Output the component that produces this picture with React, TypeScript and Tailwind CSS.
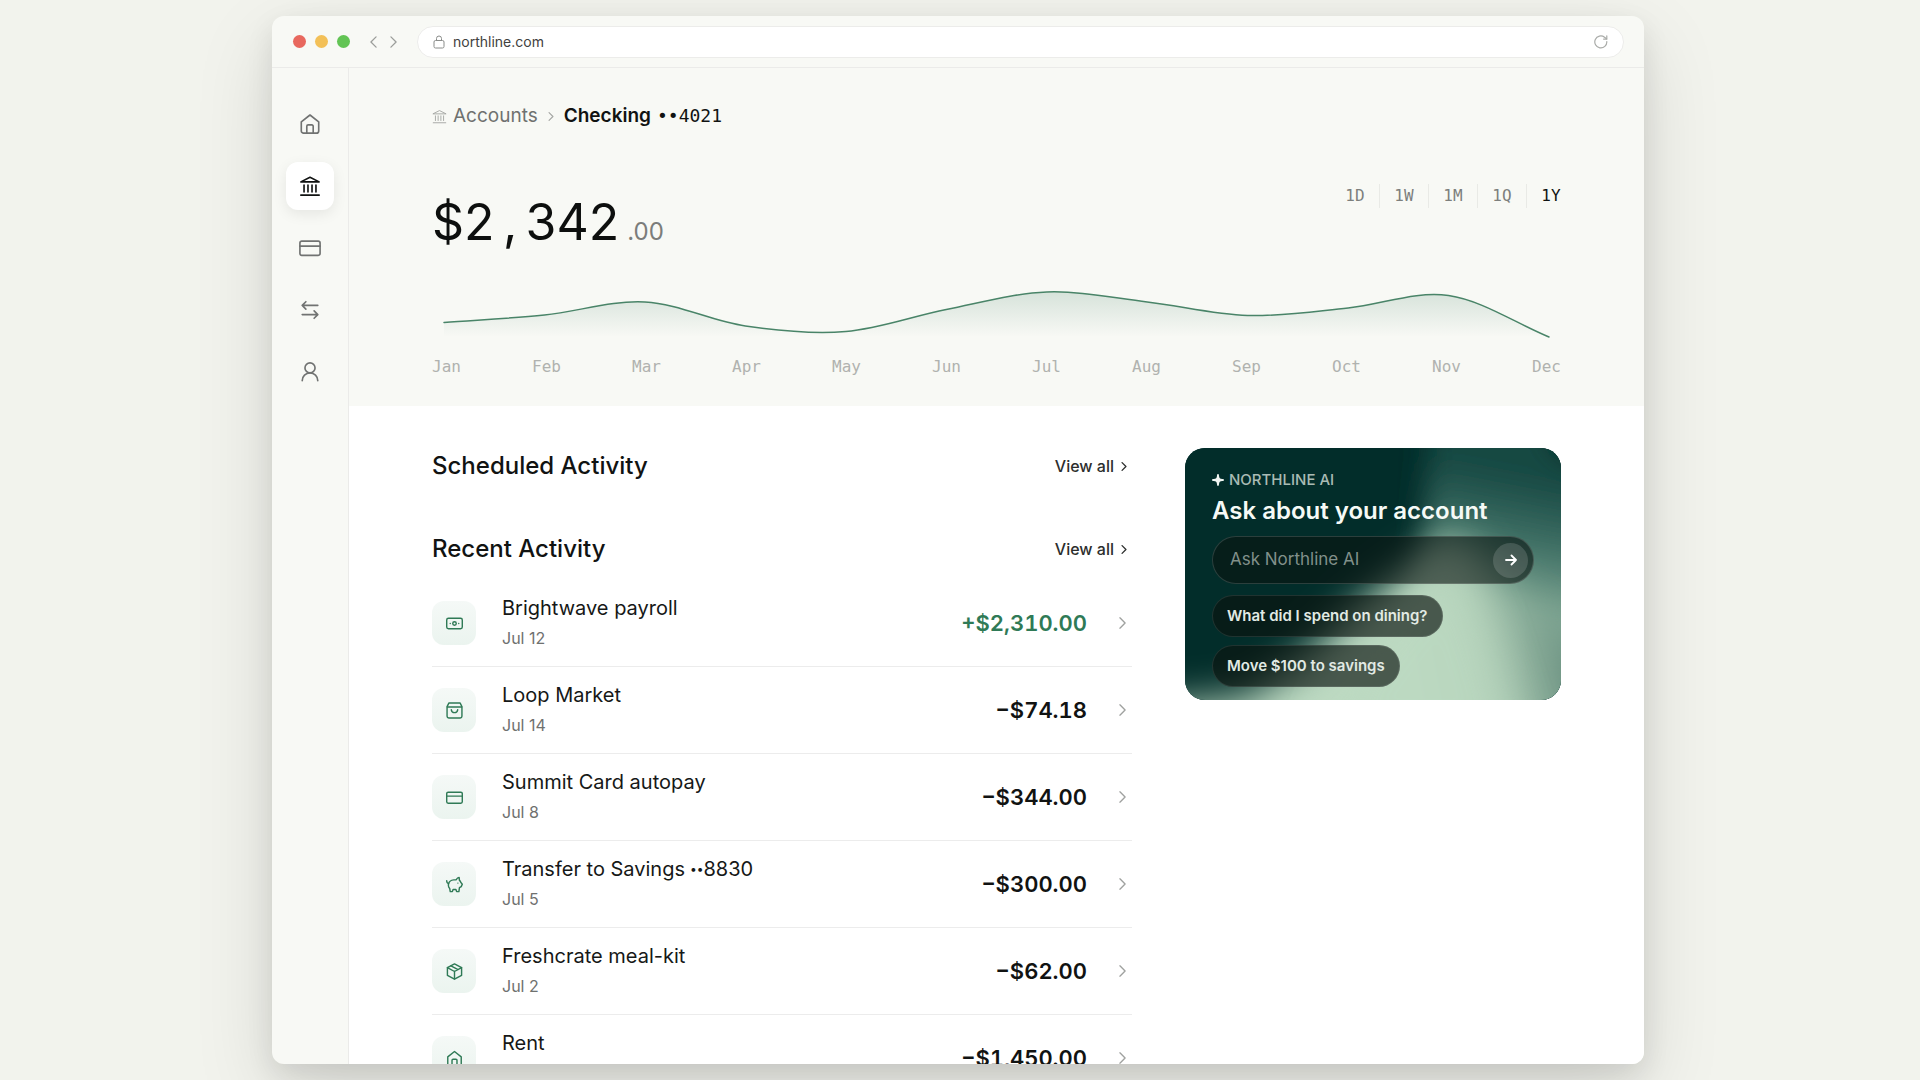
import { useState } from "react";
import type { ReactNode } from "react";

type IconName =
  | "home"
  | "bank"
  | "card"
  | "transfer"
  | "user"
  | "cash"
  | "bag"
  | "piggy"
  | "box";

// Line icons on a 24x24 grid
const ICON_PATHS: Record<IconName, ReactNode> = {
  home: (
    <>
      <path d="M2.500 9.700 12 2.200l9.500 7.500V19.500a2.500 2.500 0 0 1-2.500 2.500H5a2.500 2.500 0 0 1-2.500-2.500z" />
      <path d="M8.500 22v-7.500a1.500 1.500 0 0 1 1.500-1.500h4a1.500 1.500 0 0 1 1.500 1.500V22" />
    </>
  ),
  bank: (
    <>
      <path d="M2 7.500 12 2.500l10 5z" />
      <path d="M2 22h20M5.500 11v7.500M9.800 11v7.500M14.200 11v7.500M18.500 11v7.500" />
    </>
  ),
  card: (
    <>
      <rect x="1" y="4.500" width="22" height="15.500" rx="2" />
      <path d="M1 10h22" />
    </>
  ),
  transfer: (
    <>
      <path d="M20.500 7h-17M7.500 3l-4 4 4 4" />
      <path d="M3.500 17h17M16.500 13l4 4-4 4" />
    </>
  ),
  user: (
    <>
      <circle cx="12" cy="7.500" r="5.500" />
      <path d="M3.500 21.500c0-4.700 3.800-8.500 8.500-8.500s8.500 3.800 8.500 8.500" />
    </>
  ),
  cash: (
    <>
      <rect x="1" y="4.500" width="22" height="15" rx="2.500" />
      <circle cx="12" cy="12" r="2.500" />
      <path d="M6 12h.01M18 12h.01" />
    </>
  ),
  bag: (
    <>
      <path d="M1.500 6.500 4 1.500h16l2.500 5V20a2.500 2.500 0 0 1-2.500 2.500H4A2.500 2.500 0 0 1 1.500 20z" />
      <path d="M2 7h20M7.500 11c.4 2.600 2.200 4 4.500 4s4.100-1.400 4.500-4" />
    </>
  ),
  piggy: (
    <>
      <path d="M18.500 2l.5 4.200c1 .9 1.600 1.800 2 2.900l2 2.400-1.500 3.500-2.500 1.500-.8 5.500h-3.200l-1-3h-4l-1 3H6l-.8-4.500C3.800 16 3 14 3.500 11.500 4.200 8 7.200 5.800 11 5.500l3.500-.3C15.500 3.500 16.800 2.300 18.500 2z" />
      <path d="M3.600 11C1.800 10.400.9 9 1 6.500M16.800 10h.01" />
    </>
  ),
  box: (
    <>
      <path d="M12 1.200 22 6.500v11L12 22.800 2 17.500v-11z" />
      <path d="M2 6.500 12 12l10-5.500M12 12v10.500M7 3.900l10 5.400" />
    </>
  ),
};

function Icon({ name, className }: { name: IconName; className?: string }) {
  return (
    <svg
      viewBox="0 0 24 24"
      fill="none"
      stroke="currentColor"
      strokeLinecap="round"
      strokeLinejoin="round"
      className={className}
      aria-hidden="true"
    >
      {ICON_PATHS[name]}
    </svg>
  );
}

function Chevron({ className, left = false }: { className?: string; left?: boolean }) {
  return (
    <svg
      viewBox="0 0 8 14"
      fill="none"
      stroke="currentColor"
      strokeLinecap="round"
      strokeLinejoin="round"
      className={className}
      aria-hidden="true"
    >
      <path d={left ? "M7 1 1 7l6 6" : "M1 1l6 6-6 6"} />
    </svg>
  );
}

const NAV_ITEMS: { label: string; icon: IconName }[] = [
  { label: "Home", icon: "home" },
  { label: "Accounts", icon: "bank" },
  { label: "Cards", icon: "card" },
  { label: "Transfers", icon: "transfer" },
  { label: "Profile", icon: "user" },
];

const RANGES = ["1D", "1W", "1M", "1Q", "1Y"];

const MONTHS = ["Jan", "Feb", "Mar", "Apr", "May", "Jun", "Jul", "Aug", "Sep", "Oct", "Nov", "Dec"];

// One y value per month, in chart units (0 is the top)
const BALANCE_POINTS = [39.5, 32, 19, 43, 48.5, 26.5, 9, 19, 32.5, 25, 12.5, 54];

const ACTIVITY: { name: string; last4?: string; date: string; amount: string; icon: IconName }[] = [
  { name: "Brightwave payroll", date: "Jul 12", amount: "+$2,310.00", icon: "cash" },
  { name: "Loop Market", date: "Jul 14", amount: "−$74.18", icon: "bag" },
  { name: "Summit Card autopay", date: "Jul 8", amount: "−$344.00", icon: "card" },
  { name: "Transfer to Savings", last4: "8830", date: "Jul 5", amount: "−$300.00", icon: "piggy" },
  { name: "Freshcrate meal-kit", date: "Jul 2", amount: "−$62.00", icon: "box" },
  { name: "Rent", date: "Jul 1", amount: "−$1,450.00", icon: "home" },
];

const PROMPTS = ["What did I spend on dining?", "Move $100 to savings"];

// Smooth curve through every point (Catmull-Rom as cubic beziers)
function buildCurve(values: number[], start: number, end: number): string {
  const last = values.length - 1;
  const step = (end - start) / last;
  const at = (i: number) => {
    if (i < 0) return 2 * values[0] - values[1];
    if (i > last) return 2 * values[last] - values[last - 1];
    return values[i];
  };
  let d = `M${start} ${values[0]}`;
  for (let i = 0; i < last; i++) {
    const x = start + i * step;
    const c1 = at(i) + (at(i + 1) - at(i - 1)) / 6;
    const c2 = at(i + 1) - (at(i + 2) - at(i)) / 6;
    d += ` C${x + step / 3} ${c1} ${x + (step * 2) / 3} ${c2} ${x + step} ${at(i + 1)}`;
  }
  return d;
}

function TitleBar() {
  return (
    <header className="flex h-[52px] shrink-0 items-center border-b border-[#ebebe9] pr-5 pl-[21px]">
      <div className="flex gap-[9px]">
        <span className="size-[13px] rounded-full bg-[#e8685e]" />
        <span className="size-[13px] rounded-full bg-[#f3c057]" />
        <span className="size-[13px] rounded-full bg-[#62c454]" />
      </div>
      <button type="button" aria-label="Back" className="ml-5 text-[#9c9e9b]">
        <Chevron left className="h-3 w-[7px] stroke-[1.5]" />
      </button>
      <button type="button" aria-label="Forward" className="ml-[13px] text-[#9c9e9b]">
        <Chevron className="h-3 w-[7px] stroke-[1.5]" />
      </button>
      <div className="ml-5 flex h-8 flex-1 items-center rounded-full border border-[#ececea] bg-white px-[15px]">
        <svg viewBox="0 0 12 14" fill="none" stroke="#8a8c8a" className="h-[14px] w-3" aria-hidden="true">
          <rect x="1" y="5.500" width="10" height="7.500" rx="1.500" />
          <path d="M3.500 5.500V3.500a2.500 2.500 0 0 1 5 0v2" />
        </svg>
        <input
          type="text"
          aria-label="Address"
          defaultValue="northline.com"
          className="ml-2 min-w-0 flex-1 bg-transparent text-[14px] text-[#3f4140] outline-none"
        />
        <button type="button" aria-label="Reload" className="text-[#a9aba8]">
          <svg viewBox="0 0 14 14" fill="none" stroke="currentColor" className="size-[14px] stroke-[1.2]" strokeLinecap="round" aria-hidden="true">
            <path d="M12.800 6.500A6 6 0 1 1 10.500 2.200l2 1.600" />
            <path d="M12.800.8v3.300H9.600" />
          </svg>
        </button>
      </div>
    </header>
  );
}

function Sidebar() {
  return (
    <nav
      aria-label="Main"
      className="flex w-[77px] shrink-0 flex-col items-center gap-[14px] border-r border-[#ebebe9] pt-8"
    >
      {NAV_ITEMS.map((item) => {
        const active = item.label === "Accounts";
        return (
          <button
            key={item.label}
            type="button"
            aria-label={item.label}
            aria-current={active ? "page" : undefined}
            className={`flex size-12 items-center justify-center rounded-xl ${
              active
                ? "bg-white text-[#111312] shadow-[0_4px_14px_rgba(0,0,0,0.08)]"
                : "text-[#717372]"
            }`}
          >
            <Icon name={item.icon} className="size-[22px] stroke-[1.8]" />
          </button>
        );
      })}
    </nav>
  );
}

function BalanceChart() {
  const curve = buildCurve(BALANCE_POINTS, 12, 1117);

  return (
    <div className="mt-[31px]">
      <svg viewBox="0 0 1129 60" preserveAspectRatio="none" className="h-[60px] w-full" role="img" aria-label="Balance over the year">
        <defs>
          <linearGradient id="area" gradientUnits="userSpaceOnUse" x1="0" y1="8" x2="0" y2="54">
            <stop offset="0" stopColor="#2f7355" stopOpacity="0.17" />
            <stop offset="1" stopColor="#2f7355" stopOpacity="0" />
          </linearGradient>
        </defs>
        <path d={`${curve} L12 54 Z`} fill="url(#area)" />
        <path d={curve} fill="none" stroke="#498468" strokeWidth="1.500" strokeLinecap="round" vectorEffect="non-scaling-stroke" />
      </svg>
      <div className="mt-[14px] flex justify-between font-['DejaVu_Sans_Mono',monospace] text-[16px] leading-5 text-[#b0b2af]">
        {MONTHS.map((month) => (
          <span key={month}>{month}</span>
        ))}
      </div>
    </div>
  );
}

function AccountHeader() {
  const [range, setRange] = useState("1Y");

  return (
    <section className="bg-[#f8f9f5] px-[83px] pt-[34px] pb-[29px]">
      <div className="flex h-7 items-center text-[19px]">
        <Icon name="bank" className="size-[15px] stroke-[1.5] text-[#a5a7a4]" />
        <a href="#accounts" className="ml-[6px] text-[#6f716f]">
          Accounts
        </a>
        <Chevron className="mx-[10px] h-[9px] w-[6px] stroke-[1.8] text-[#a5a7a4]" />
        <h1 className="flex items-baseline gap-[6px] font-semibold text-[#111312]">
          Checking
          <span className="font-['DejaVu_Sans_Mono',monospace] text-[18px] font-normal">••4021</span>
        </h1>
      </div>

      <div className="mt-[54px] flex items-start justify-between">
        <p className="flex items-baseline pt-2 text-[50px] leading-[60px] text-[#0d0f0e]">
          $2<span className="w-[31px] text-center">,</span>342
          <span className="ml-2 text-[24px] leading-6 text-[#7b7d7b]">.00</span>
        </p>
        <div role="group" aria-label="Range" className="-mr-[15px] flex font-['DejaVu_Sans_Mono',monospace] text-[16px]">
          {RANGES.map((r) => (
            <button
              key={r}
              type="button"
              aria-pressed={range === r}
              onClick={() => setRange(r)}
              className={`h-6 w-[49px] border-r border-[#e9eae6] last:border-transparent ${
                range === r ? "text-[#111312]" : "text-[#7d7f7d]"
              }`}
            >
              {r}
            </button>
          ))}
        </div>
      </div>

      <BalanceChart />
    </section>
  );
}

function SectionTitle({ title }: { title: string }) {
  return (
    <div className="flex items-center justify-between pr-[5px]">
      <h2 className="text-[24px] leading-9 font-medium text-[#111312]">{title}</h2>
      <a href="#all" className="flex items-center gap-[7px] text-[16px] font-medium text-[#2c2e2d]">
        View all
        <Chevron className="h-[9px] w-[6px] stroke-2" />
      </a>
    </div>
  );
}

function ActivityList() {
  return (
    <ul className="mt-[13px]">
      {ACTIVITY.map((item) => (
        <li key={item.name} className="border-b border-[#ececec]">
          <button type="button" className="flex w-full items-center py-[13px] text-left">
            <span className="flex size-11 items-center justify-center rounded-xl bg-linear-to-b from-[#f5f9f7] to-[#ebf4ef] text-[#2f7a56]">
              <Icon name={item.icon} className="size-[17px] stroke-2" />
            </span>
            <span className="ml-[26px] flex flex-1 flex-col">
              <span className="flex items-center text-[20px] leading-[30px] text-[#161817]">
                {item.name}
                {item.last4 && (
                  <>
                    <span className="ml-[5px] text-[12px]">••</span>
                    {item.last4}
                  </>
                )}
              </span>
              <span className="text-[16px] leading-[30px] text-[#6f716f]">{item.date}</span>
            </span>
            <span
              className={`text-[22px] font-semibold tabular-nums ${
                item.amount.startsWith("+") ? "text-[#2f7a56]" : "text-[#111312]"
              }`}
            >
              {item.amount}
            </span>
            <Chevron className="mr-[6px] ml-8 h-3 w-[7px] stroke-[1.6] text-[#a0a2a0]" />
          </button>
        </li>
      ))}
    </ul>
  );
}

// Soft light falling over the dark card
function CardGlow() {
  return (
    <svg viewBox="0 0 376 252" preserveAspectRatio="none" className="absolute inset-0 size-full" aria-hidden="true">
      <defs>
        <linearGradient id="beam" gradientUnits="userSpaceOnUse" x1="230" y1="200" x2="390" y2="170">
          <stop offset="0" stopColor="#bddac2" />
          <stop offset="0.4" stopColor="#b0ceb7" />
          <stop offset="1" stopColor="#5f8778" />
        </linearGradient>
        <linearGradient id="haze" gradientUnits="userSpaceOnUse" x1="250" y1="10" x2="225" y2="140">
          <stop offset="0" stopColor="#174843" />
          <stop offset="0.5" stopColor="#3f7065" />
          <stop offset="1" stopColor="#7fa693" />
        </linearGradient>
        <filter id="soft" x="-30%" y="-30%" width="160%" height="160%">
          <feGaussianBlur stdDeviation="14" />
        </filter>
        <filter id="softer" x="-40%" y="-40%" width="180%" height="180%">
          <feGaussianBlur stdDeviation="20" />
        </filter>
      </defs>
      <rect width="376" height="252" fill="#022d2a" />
      <path d="M246 -60 H340 L375 10 L440 30 V240 H215 L238 110z" fill="url(#haze)" filter="url(#soft)" />
      <path d="M-60 330 L-60 262 L60 250 L120 210 L175 158 L230 118 L270 90 L325 150 L440 225 V330z" fill="url(#beam)" filter="url(#softer)" />
      <path d="M130 300 L165 220 L210 160 L260 100 L300 170 L340 300z" fill="#bcd9c1" opacity="0.6" filter="url(#softer)" />
    </svg>
  );
}

function AssistantCard() {
  const [question, setQuestion] = useState("");

  return (
    <aside className="relative w-[376px] shrink-0 self-start overflow-hidden rounded-[20px] bg-[#022d2a] px-[27px] pt-[22px] pb-[13px]">
      <CardGlow />
      <div className="relative">
        <p className="flex items-center gap-[5px] text-[15px] leading-5 font-medium text-[#a9bbb4]">
          <svg viewBox="0 0 12 12" fill="#f1f5f2" className="size-3" aria-hidden="true">
            <path d="M6 0c.7 0 .9.600 1 1.700C7.200 4 8 4.800 10.300 5c1.100.1 1.700.3 1.700 1s-.6.9-1.700 1C8 7.200 7.200 8 7 10.300 6.900 11.400 6.700 12 6 12s-.9-.6-1-1.700C4.800 8 4 7.200 1.700 7 .6 6.900 0 6.700 0 6s.6-.9 1.700-1C4 4.800 4.800 4 5 1.700 5.100.6 5.300 0 6 0z" />
          </svg>
          NORTHLINE AI
        </p>
        <h2 className="mt-1 text-[24px] leading-[34px] font-semibold text-[#f6faf6]">Ask about your account</h2>
        <form
          onSubmit={(e) => e.preventDefault()}
          className="mt-2 flex h-12 items-center rounded-full border border-white/15 bg-[#0a1410]/60 pr-[5px] pl-[17px] text-[17px]"
        >
          <input
            type="text"
            aria-label="Ask Northline AI"
            placeholder="Ask Northline AI"
            value={question}
            onChange={(e) => setQuestion(e.target.value)}
            className="min-w-0 flex-1 bg-transparent text-white outline-none placeholder:text-[#81908a]"
          />
          <button type="submit" aria-label="Send" className="flex size-[35px] items-center justify-center rounded-full bg-white/15 text-white">
            <svg viewBox="0 0 12 12" fill="none" stroke="currentColor" strokeLinecap="round" strokeLinejoin="round" className="size-3 stroke-[1.8]" aria-hidden="true">
              <path d="M1 6h10M6.500 1.500 11 6l-4.500 4.500" />
            </svg>
          </button>
        </form>
        <div className="mt-[11px] flex flex-col items-start gap-2">
          {PROMPTS.map((prompt) => (
            <button
              key={prompt}
              type="button"
              onClick={() => setQuestion(prompt)}
              className="h-[42px] rounded-full border border-white/10 bg-[#0a1410]/65 px-[14px] text-[15px] font-semibold text-[#e2eae4]"
            >
              {prompt}
            </button>
          ))}
        </div>
      </div>
    </aside>
  );
}

export default function App() {
  return (
    <div className="h-screen overflow-hidden bg-[#f2f3ed] py-4 pr-69 pl-68 font-['Inter',sans-serif]">
      <div className="flex h-full flex-col overflow-hidden rounded-xl bg-[#f8f9f5] shadow-[0_28px_80px_rgba(0,0,0,0.13),0_10px_28px_rgba(0,0,0,0.09)]">
        <TitleBar />
        <div className="flex min-h-0 flex-1">
          <Sidebar />
          <main className="min-w-0 flex-1 overflow-hidden bg-white">
            <AccountHeader />
            <div className="flex gap-[53px] px-[83px] pt-[42px]">
              <div className="min-w-0 flex-1">
                <SectionTitle title="Scheduled Activity" />
                <div className="mt-[47px]">
                  <SectionTitle title="Recent Activity" />
                </div>
                <ActivityList />
              </div>
              <AssistantCard />
            </div>
          </main>
        </div>
      </div>
    </div>
  );
}
